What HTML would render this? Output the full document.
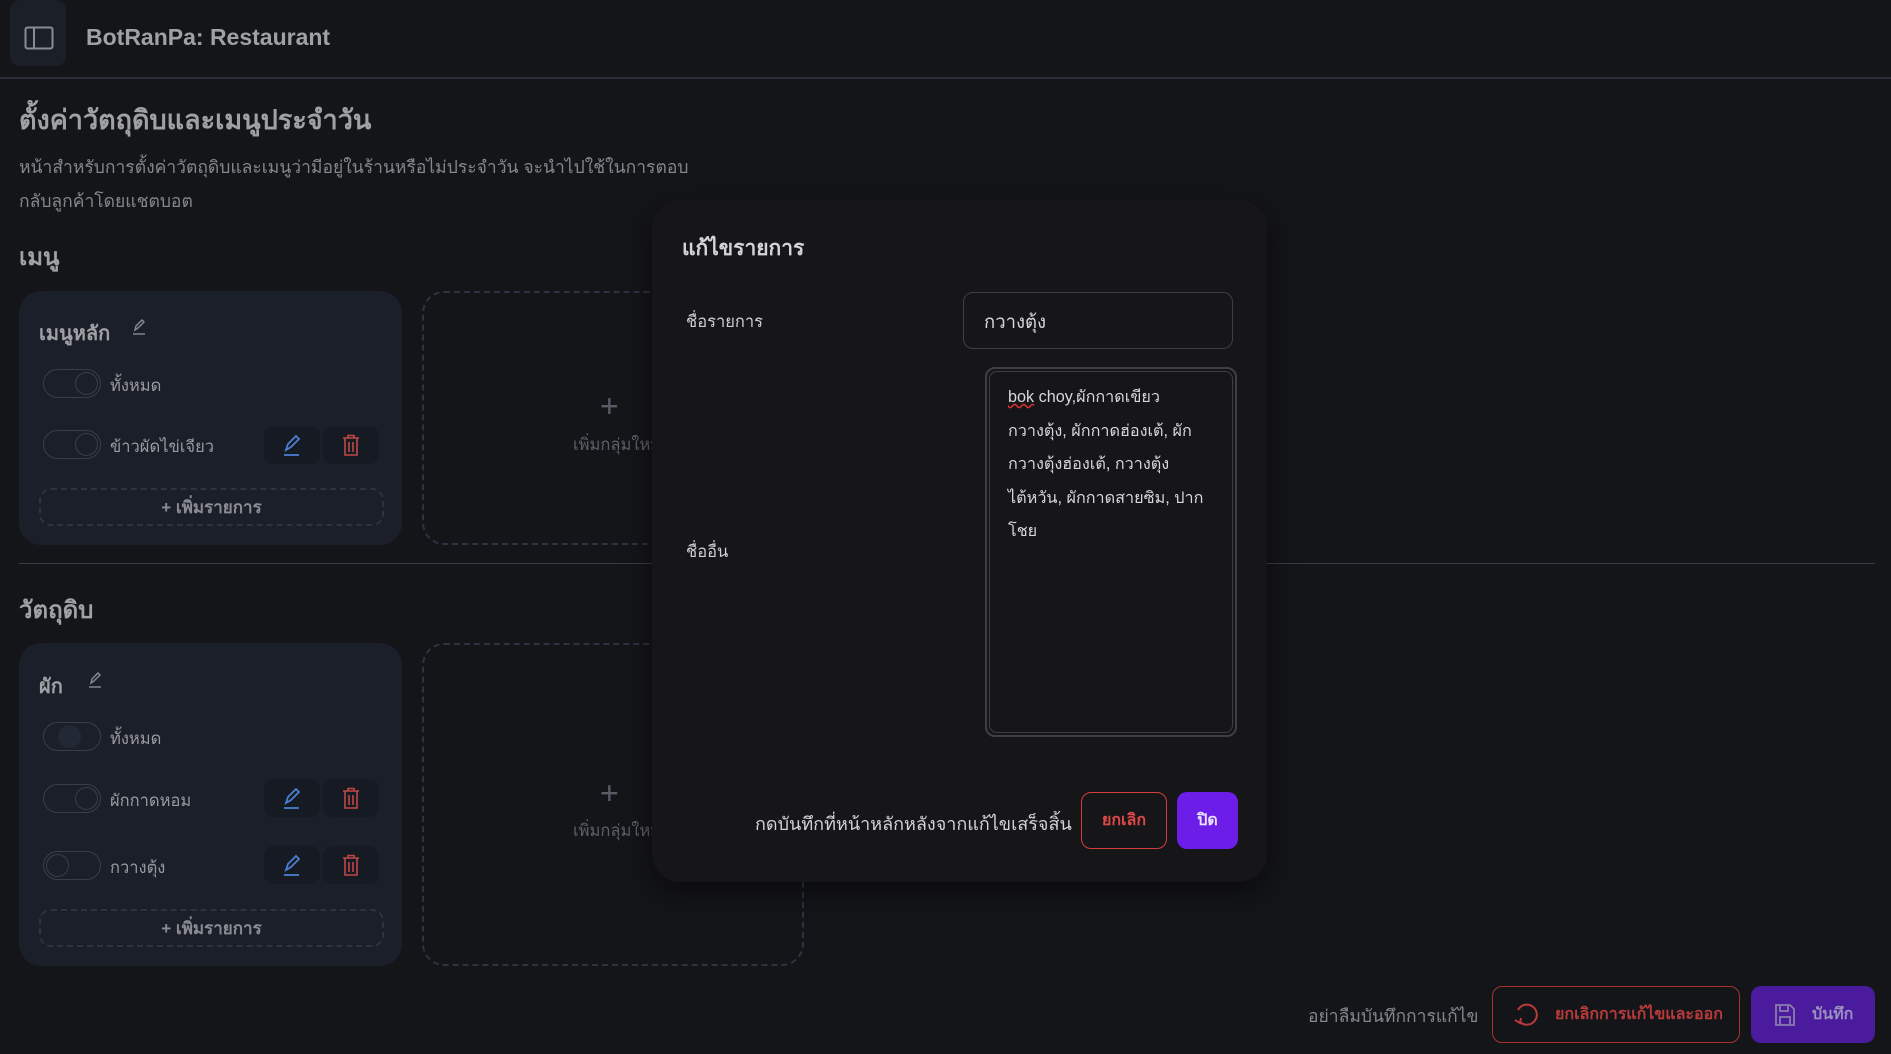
<!DOCTYPE html>
<html><head><meta charset="utf-8"><style>
*{box-sizing:border-box;margin:0;padding:0}
body{width:1891px;height:1054px;background:#141519;font-family:"Liberation Sans","Noto Sans CJK SC",sans-serif;color:#9a9b9f;position:relative;overflow:hidden}
.a{position:absolute;white-space:nowrap}
.card{position:absolute;background:#1a1f29;border-radius:22px}
.dash{position:absolute;border:2px dashed #2e3340;border-radius:22px}
.tog{position:absolute;width:58px;height:29px;border:1.5px solid #3a3e48;border-radius:15px}
.tog i{position:absolute;top:2px;width:23px;height:23px;border:1.5px solid #3a3e48;border-radius:50%}
.btn{position:absolute;width:56px;height:38px;background:#161a22;border-radius:10px;display:flex;align-items:center;justify-content:center}
.add{position:absolute;border:2px dashed #2e3340;border-radius:12px;color:#8a8c92;font-size:17px;font-weight:bold;display:flex;align-items:center;justify-content:center}
</style></head><body>
<div class="a" style="left:10px;top:0;width:56px;height:66px;background:#1b1f28;border-radius:10px"></div>
<svg class="a" style="left:24px;top:26px" width="30" height="24" viewBox="0 0 30 24"><rect x="1.5" y="1.5" width="27" height="21" rx="2" fill="none" stroke="#8a8c92" stroke-width="2"/><line x1="10" y1="2" x2="10" y2="22" stroke="#8a8c92" stroke-width="2"/></svg>
<div class="a" style="left:86px;top:24px;font-size:23px;font-weight:bold;color:#a0a1a5">BotRanPa: Restaurant</div>
<div class="a" style="left:0;top:77px;width:1891px;height:2px;background:#2a2f3a"></div>
<div class="a" style="left:19px;top:98px;font-size:27px;font-weight:bold;color:#a0a1a5">ตั้งค่าวัตถุดิบและเมนูประจำวัน</div>
<div class="a" style="left:19px;top:150px;font-size:17.5px;line-height:34px;color:#85878c">หน้าสำหรับการตั้งค่าวัตถุดิบและเมนูว่ามีอยู่ในร้านหรือไม่ประจำวัน จะนำไปใช้ในการตอบ<br>กลับลูกค้าโดยแชตบอต</div>
<div class="a" style="left:19px;top:237px;font-size:24px;font-weight:bold;color:#a0a1a5">เมนู</div>

<div class="card" style="left:19px;top:291px;width:383px;height:254px"></div>
<div class="a" style="left:39px;top:317px;font-size:20px;font-weight:bold;color:#a0a1a5">เมนูหลัก</div>
<svg class="a" style="left:131px;top:318px" width="16" height="18" viewBox="0 0 16 18" fill="none" stroke="#8a8c92" stroke-width="1.4"><path d="M4 12l1-4 6-6 2 2-6 6z"/><path d="M2 16h12"/></svg>
<div class="tog" style="left:43px;top:369px"><i style="right:2px"></i></div>
<div class="a" style="left:110px;top:373px;font-size:16.5px">ทั้งหมด</div>
<div class="tog" style="left:43px;top:430px"><i style="right:2px"></i></div>
<div class="a" style="left:110px;top:434px;font-size:16.5px">ข้าวผัดไข่เจียว</div>
<div class="btn" style="left:264px;top:426px"><svg width="22" height="24" viewBox="0 0 22 24" fill="none" stroke="#4a7fd0" stroke-width="1.8"><path d="M5 17l2-6 8-8 3 3-8 8z"/><path d="M3 22h15"/></svg></div>
<div class="btn" style="left:323px;top:426px"><svg width="18" height="22" viewBox="0 0 18 22" fill="none" stroke="#c04848" stroke-width="1.6"><path d="M1 4h16M6 4V1.5h6V4M3 4v17h12V4M7 8v10M11 8v10"/></svg></div>
<div class="add" style="left:39px;top:488px;width:345px;height:38px">+ เพิ่มรายการ</div>
<div class="dash" style="left:422px;top:291px;width:382px;height:254px"></div>
<div class="a" style="left:600px;top:388px;font-size:32px;color:#5a5d66">+</div>
<div class="a" style="left:573px;top:432px;font-size:16.5px;color:#5e6068">เพิ่มกลุ่มใหม่</div>

<div class="a" style="left:19px;top:563px;width:1856px;height:1px;background:#3a3d44"></div>
<div class="a" style="left:19px;top:590px;font-size:24px;font-weight:bold;color:#a0a1a5">วัตถุดิบ</div>
<div class="card" style="left:19px;top:643px;width:383px;height:323px"></div>
<div class="a" style="left:39px;top:670px;font-size:20px;font-weight:bold;color:#a0a1a5">ผัก</div>
<svg class="a" style="left:87px;top:671px" width="16" height="18" viewBox="0 0 16 18" fill="none" stroke="#8a8c92" stroke-width="1.4"><path d="M4 12l1-4 6-6 2 2-6 6z"/><path d="M2 16h12"/></svg>
<div class="tog" style="left:43px;top:722px"><i style="left:14px;border-color:transparent;background:#222836"></i></div>
<div class="a" style="left:110px;top:726px;font-size:16.5px">ทั้งหมด</div>
<div class="tog" style="left:43px;top:784px"><i style="right:2px"></i></div>
<div class="a" style="left:110px;top:788px;font-size:16.5px">ผักกาดหอม</div>
<div class="btn" style="left:264px;top:779px"><svg width="22" height="24" viewBox="0 0 22 24" fill="none" stroke="#4a7fd0" stroke-width="1.8"><path d="M5 17l2-6 8-8 3 3-8 8z"/><path d="M3 22h15"/></svg></div>
<div class="btn" style="left:323px;top:779px"><svg width="18" height="22" viewBox="0 0 18 22" fill="none" stroke="#c04848" stroke-width="1.6"><path d="M1 4h16M6 4V1.5h6V4M3 4v17h12V4M7 8v10M11 8v10"/></svg></div>
<div class="tog" style="left:43px;top:851px"><i style="left:2px"></i></div>
<div class="a" style="left:110px;top:855px;font-size:16.5px">กวางตุ้ง</div>
<div class="btn" style="left:264px;top:846px"><svg width="22" height="24" viewBox="0 0 22 24" fill="none" stroke="#4a7fd0" stroke-width="1.8"><path d="M5 17l2-6 8-8 3 3-8 8z"/><path d="M3 22h15"/></svg></div>
<div class="btn" style="left:323px;top:846px"><svg width="18" height="22" viewBox="0 0 18 22" fill="none" stroke="#c04848" stroke-width="1.6"><path d="M1 4h16M6 4V1.5h6V4M3 4v17h12V4M7 8v10M11 8v10"/></svg></div>
<div class="add" style="left:39px;top:909px;width:345px;height:38px">+ เพิ่มรายการ</div>
<div class="dash" style="left:422px;top:643px;width:382px;height:323px"></div>
<div class="a" style="left:600px;top:775px;font-size:32px;color:#5a5d66">+</div>
<div class="a" style="left:573px;top:818px;font-size:16.5px;color:#5e6068">เพิ่มกลุ่มใหม่</div>

<div class="a" style="left:652px;top:200px;width:615px;height:682px;background:#161618;border-radius:28px;box-shadow:0 10px 30px rgba(0,0,0,.5)"></div>
<div class="a" style="left:682px;top:232px;font-size:21px;font-weight:bold;color:#d4d4d6">แก้ไขรายการ</div>
<div class="a" style="left:686px;top:309px;font-size:16.5px;color:#cfcfd1">ชื่อรายการ</div>
<div class="a" style="left:963px;top:292px;width:270px;height:57px;border:1.5px solid #3e3f44;border-radius:10px"></div>
<div class="a" style="left:984px;top:308px;font-size:18.5px;color:#d8d8da">กวางตุ้ง</div>
<div class="a" style="left:686px;top:539px;font-size:16.5px;color:#cfcfd1">ชื่ออื่น</div>
<div class="a" style="left:985px;top:367px;width:252px;height:370px;border:2px solid #3e3f44;border-radius:10px;padding:2px"><div style="width:100%;height:100%;border:1.5px solid #3e3f44;border-radius:8px"></div></div>
<div class="a" style="left:1008px;top:381px;font-size:16.2px;line-height:33.5px;color:#d8d8da"><span style="text-decoration:underline wavy #d03030">bok</span> choy,ผักกาดเขียว<br>กวางตุ้ง, ผักกาดฮ่องเต้, ผัก<br>กวางตุ้งฮ่องเต้, กวางตุ้ง<br>ไต้หวัน, ผักกาดสายซิม, ปาก<br>โชย</div>
<div class="a" style="left:755px;top:809px;font-size:18px;color:#d4d4d6">กดบันทึกที่หน้าหลักหลังจากแก้ไขเสร็จสิ้น</div>
<div class="a" style="left:1081px;top:792px;width:86px;height:57px;border:1.5px solid #d63c3c;border-radius:10px;color:#e04848;font-weight:bold;font-size:16px;display:flex;align-items:center;justify-content:center">ยกเลิก</div>
<div class="a" style="left:1177px;top:792px;width:61px;height:57px;background:#6c1ee8;border-radius:10px;color:#e8e0ff;font-weight:bold;font-size:16px;display:flex;align-items:center;justify-content:center">ปิด</div>

<div class="a" style="left:1308px;top:1002px;font-size:17.5px;color:#85878c">อย่าลืมบันทึกการแก้ไข</div>
<div class="a" style="left:1492px;top:986px;width:248px;height:57px;border:1.5px solid #a83232;border-radius:10px"></div>
<svg class="a" style="left:1512px;top:1000px" width="28" height="28" viewBox="0 0 28 28" fill="none" stroke="#b83a3a" stroke-width="2"><path d="M8 22A10 10 0 1 0 6 10"/><path d="M3 20l5 3 1-5"/></svg>
<div class="a" style="left:1555px;top:1002px;font-size:16px;font-weight:bold;color:#b83a3a">ยกเลิกการแก้ไขและออก</div>
<div class="a" style="left:1751px;top:986px;width:124px;height:57px;background:#4a1b9c;border-radius:10px"></div>
<svg class="a" style="left:1774px;top:1003px" width="22" height="24" viewBox="0 0 22 24" fill="none" stroke="#8a7cb0" stroke-width="1.8"><path d="M2 2h14l4 4v16H2z"/><path d="M6 2v6h8V2M6 22v-8h10v8"/></svg>
<div class="a" style="left:1812px;top:1002px;font-size:16px;font-weight:bold;color:#9a8fc0">บันทึก</div>
</body></html>
